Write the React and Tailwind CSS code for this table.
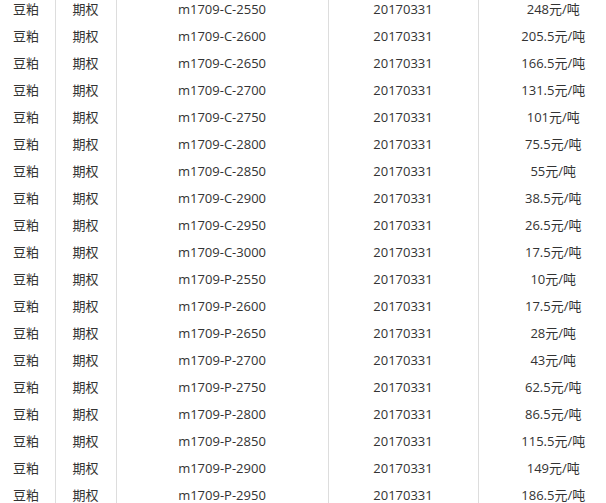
const strikes = [
  ['C', 2550, '248'],
  ['C', 2600, '205.5'],
  ['C', 2650, '166.5'],
  ['C', 2700, '131.5'],
  ['C', 2750, '101'],
  ['C', 2800, '75.5'],
  ['C', 2850, '55'],
  ['C', 2900, '38.5'],
  ['C', 2950, '26.5'],
  ['C', 3000, '17.5'],
  ['P', 2550, '10'],
  ['P', 2600, '17.5'],
  ['P', 2650, '28'],
  ['P', 2700, '43'],
  ['P', 2750, '62.5'],
  ['P', 2800, '86.5'],
  ['P', 2850, '115.5'],
  ['P', 2900, '149'],
  ['P', 2950, '186.5'],
];

export default function App() {
  return (
    <div className="w-[606px] h-[503px] overflow-hidden bg-white text-[#333] text-[13px] font-['Open_Sans','Noto_Sans_CJK_SC',sans-serif]">
      <table className="mt-[-4px] border-collapse table-fixed w-[628px]">
        <colgroup>
          <col className="w-[55px]" />
          <col className="w-[61px]" />
          <col className="w-[212px]" />
          <col className="w-[150px]" />
          <col className="w-[150px]" />
        </colgroup>
        <tbody>
          {strikes.map(([type, strike, price]) => (
            <tr key={type + strike} className="h-[27px]">
              <td className="pl-[13px] border-r border-[#ddd]">豆粕</td>
              <td className="text-center border-r border-[#ddd]">期权</td>
              <td className="text-center border-r border-[#ddd]">m1709-{type}-{strike}</td>
              <td className="text-center border-r border-[#ddd]">20170331</td>
              <td className="text-center">{price}元/吨</td>
            </tr>
          ))}
        </tbody>
      </table>
    </div>
  );
}
